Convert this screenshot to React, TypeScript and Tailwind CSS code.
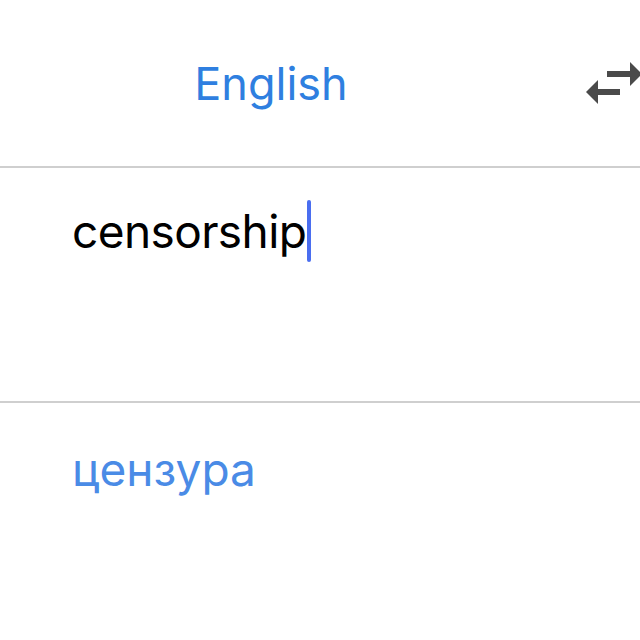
export default function App() {
  return (
    <main className="w-[640px] h-[640px] bg-white overflow-hidden flex flex-col" style={{ fontFamily: "Inter, 'Noto Sans', sans-serif" }}>
      <header className="h-[168px] shrink-0 border-b-2 border-[#cfcfcf] flex items-center relative">
        <div className="w-[542px] flex justify-center">
          <span className="text-[45px] text-[#2f7fe0] leading-none">English</span>
        </div>
        <svg className="absolute left-[580px] top-[55px]" width="60" height="55" viewBox="0 0 60 55">
          <rect x="27" y="16" width="24" height="6" fill="#4a4a4a" />
          <path d="M50 7 L62 19 L50 31 Z" fill="#4a4a4a" />
          <rect x="17" y="34" width="23" height="6" fill="#4a4a4a" />
          <path d="M18 25 L6 37 L18 49 Z" fill="#4a4a4a" />
        </svg>
      </header>
      <section className="h-[235px] shrink-0 border-b-2 border-[#cfcfcf] px-[72px] pt-[32px]">
        <div className="flex items-center">
          <span className="text-[46px] text-black leading-none tracking-[-0.6px]">censorship</span>
          <span className="w-[4px] h-[62px] rounded-full bg-[#4a6ef0] ml-[1px]" />
        </div>
      </section>
      <section className="px-[72px] pt-[43px]">
        <span className="text-[46px] text-[#4a8be6] leading-none">цензура</span>
      </section>
    </main>
  );
}
